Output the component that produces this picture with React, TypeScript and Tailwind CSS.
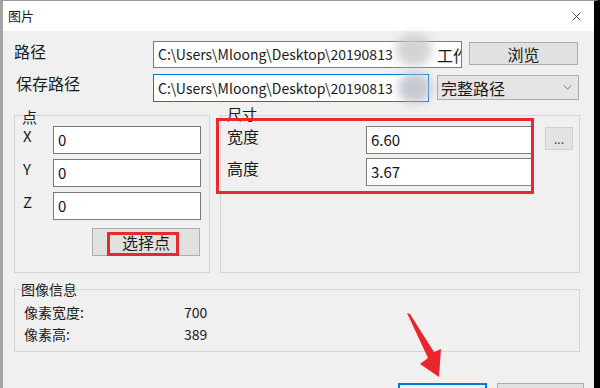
import { X, ChevronDown } from 'lucide-react';

const font = 'font-["Noto_Sans_CJK_SC","Noto_Sans",sans-serif]';

function TextBox({ value, className = '' }: { value: string; className?: string }) {
  return (
    <div className={`h-[28px] bg-white border border-[#7a7a7a] pl-[4px] flex items-center text-[15px] text-[#111] overflow-hidden whitespace-nowrap ${className}`}>
      {value}
    </div>
  );
}

export default function App() {
  const points = ['X', 'Y', 'Z'];

  return (
    <div className={`relative w-[600px] h-[388px] overflow-hidden bg-[#f0f0f0] border-t border-t-[#9a9a9a] border-l-[3px] border-l-[#a3a3a3] border-r-[6px] border-r-black text-[#1a1a1a] ${font}`}>
      {/* Title bar */}
      <div className="h-[30px] bg-white flex items-center justify-between pl-[5px] pr-[10px]">
        <span className="text-[13px]">图片</span>
        <X className="w-[15px] h-[15px] text-[#333]" strokeWidth={1.4} />
      </div>

      <div className="pl-[11px]">
        {/* Path */}
        <div className="flex items-start mt-[10px]">
          <span className="w-[139px] text-[16px] leading-[18px] mt-[1px]">路径</span>
          <div className="w-[309px] h-[27px] bg-white border border-[#7a7a7a] pl-[4px] flex items-center text-[14px] whitespace-nowrap overflow-hidden">
            <span className="w-[236px] shrink-0">C:\Users\Mloong\Desktop\20190813</span>
            <span className="ml-[43px] shrink-0 text-[16px]">工作</span>
          </div>
          <button className="ml-[7px] mt-[1px] w-[109px] h-[23px] border border-[#adadad] bg-[#e1e1e1] text-[16px] leading-[18px]">浏览</button>
        </div>

        {/* Save path */}
        <div className="flex items-start mt-[6px]">
          <span className="w-[139px] pl-[2px] text-[16px] leading-[18px]">保存路径</span>
          <div className="w-[276px] h-[28px] bg-white border border-[#0078d7] pl-[4px] flex items-center text-[14px] whitespace-nowrap overflow-hidden">
            C:\Users\Mloong\Desktop\20190813
          </div>
          <div className="ml-[8px] mt-[1px] w-[142px] h-[25px] border border-[#acacac] bg-[#e5e5e5] flex items-center justify-between pl-[3px] pr-[4px]">
            <span className="text-[16px] leading-[18px]">完整路径</span>
            <ChevronDown className="w-[13px] h-[13px] text-[#555]" strokeWidth={1.5} />
          </div>
        </div>

        {/* Groups */}
        <div className="flex mt-[13px]">
          <div className="relative w-[196px] h-[158px] border border-[#d6d6d6]">
            <span className="absolute left-[7px] top-[-7px] text-[15px] leading-[16px]">点</span>
            <div className="flex flex-col gap-[5px] pt-[10px]">
              {points.map((p) => (
                <div key={p} className="flex items-start">
                  <span className="w-[38px] pl-[8px] text-[15px] leading-[20px]">{p}</span>
                  <TextBox className="w-[148px]" value="0" />
                </div>
              ))}
            </div>
            <button className="ml-[77px] mt-[8px] w-[108px] h-[28px] border border-[#adadad] bg-[#e1e1e1] text-[16px] leading-[18px]">选择点</button>
          </div>

          <div className="relative ml-[10px] w-[360px] h-[158px] border border-[#d6d6d6]">
            <span className="absolute left-[6px] top-[-10px] text-[15px] leading-[16px]">尺寸</span>
            <div className="flex items-start pt-[10px]">
              <div className="flex flex-col gap-[4px]">
                <div className="flex items-start">
                  <span className="w-[145px] pl-[6px] text-[16px] leading-[20px]">宽度</span>
                  <TextBox className="w-[167px]" value="6.60" />
                </div>
                <div className="flex items-start">
                  <span className="w-[145px] pl-[6px] text-[16px] leading-[20px]">高度</span>
                  <div className="w-[167px] h-[28px] bg-white border border-[#7a7a7a] border-b-[#5a9e8e] pl-[4px] flex items-center text-[15px] text-[#111]">3.67</div>
                </div>
              </div>
              <button className="ml-[12px] mt-[1px] w-[28px] h-[23px] border border-[#cfcfcf] bg-[#e3e3e3] text-[12px] leading-[12px] text-[#444]">...</button>
            </div>
          </div>
        </div>

        {/* Image info */}
        <div className="relative mt-[16px] w-[566px] h-[63px] border border-[#d6d6d6]">
          <span className="absolute left-[6px] top-[-9px] text-[14px] leading-[16px]">图像信息</span>
          <div className="pt-[11px] pl-[9px] text-[14px] leading-[22px]">
            <div className="flex">
              <span className="w-[160px]">像素宽度:</span>
              <span>700</span>
            </div>
            <div className="flex">
              <span className="w-[160px]">像素高:</span>
              <span>389</span>
            </div>
          </div>
        </div>

        {/* Dialog buttons */}
        <div className="flex justify-end gap-[10px] pr-[10px] mt-[31px]">
          <button className="w-[89px] h-[26px] border-2 border-[#0078d7] bg-[#e5f1fb] text-[16px] leading-[18px] flex items-start justify-center pt-[3px]">确定</button>
          <button className="w-[87px] h-[26px] border border-[#adadad] bg-[#e1e1e1] text-[16px] leading-[18px] flex items-start justify-center pt-[2px]">取消</button>
        </div>
      </div>

      {/* Watermark blur */}
      <div className="absolute left-[393px] top-[33px] w-[36px] h-[32px] rounded-full bg-[#c9c9c9] blur-[5px] opacity-80" />
      <div className="absolute left-[395px] top-[72px] w-[34px] h-[30px] rounded-full bg-[#b9bcc6] blur-[5px] opacity-80" />

      {/* Annotations */}
      <div className="absolute left-[213px] top-[117px] w-[318px] h-[76px] border-[3px] border-[#e52a2f]" />
      <div className="absolute left-[104px] top-[231px] w-[72px] h-[24px] border-[3px] border-[#e52a2f]" />
      <svg className="absolute left-[-3px] top-[-1px] pointer-events-none" width="600" height="388" viewBox="0 0 600 388">
        <polygon points="407,313 410,314 434,352 441,349 439,377 420,364 428,358" fill="#e8262b" />
      </svg>
    </div>
  );
}
